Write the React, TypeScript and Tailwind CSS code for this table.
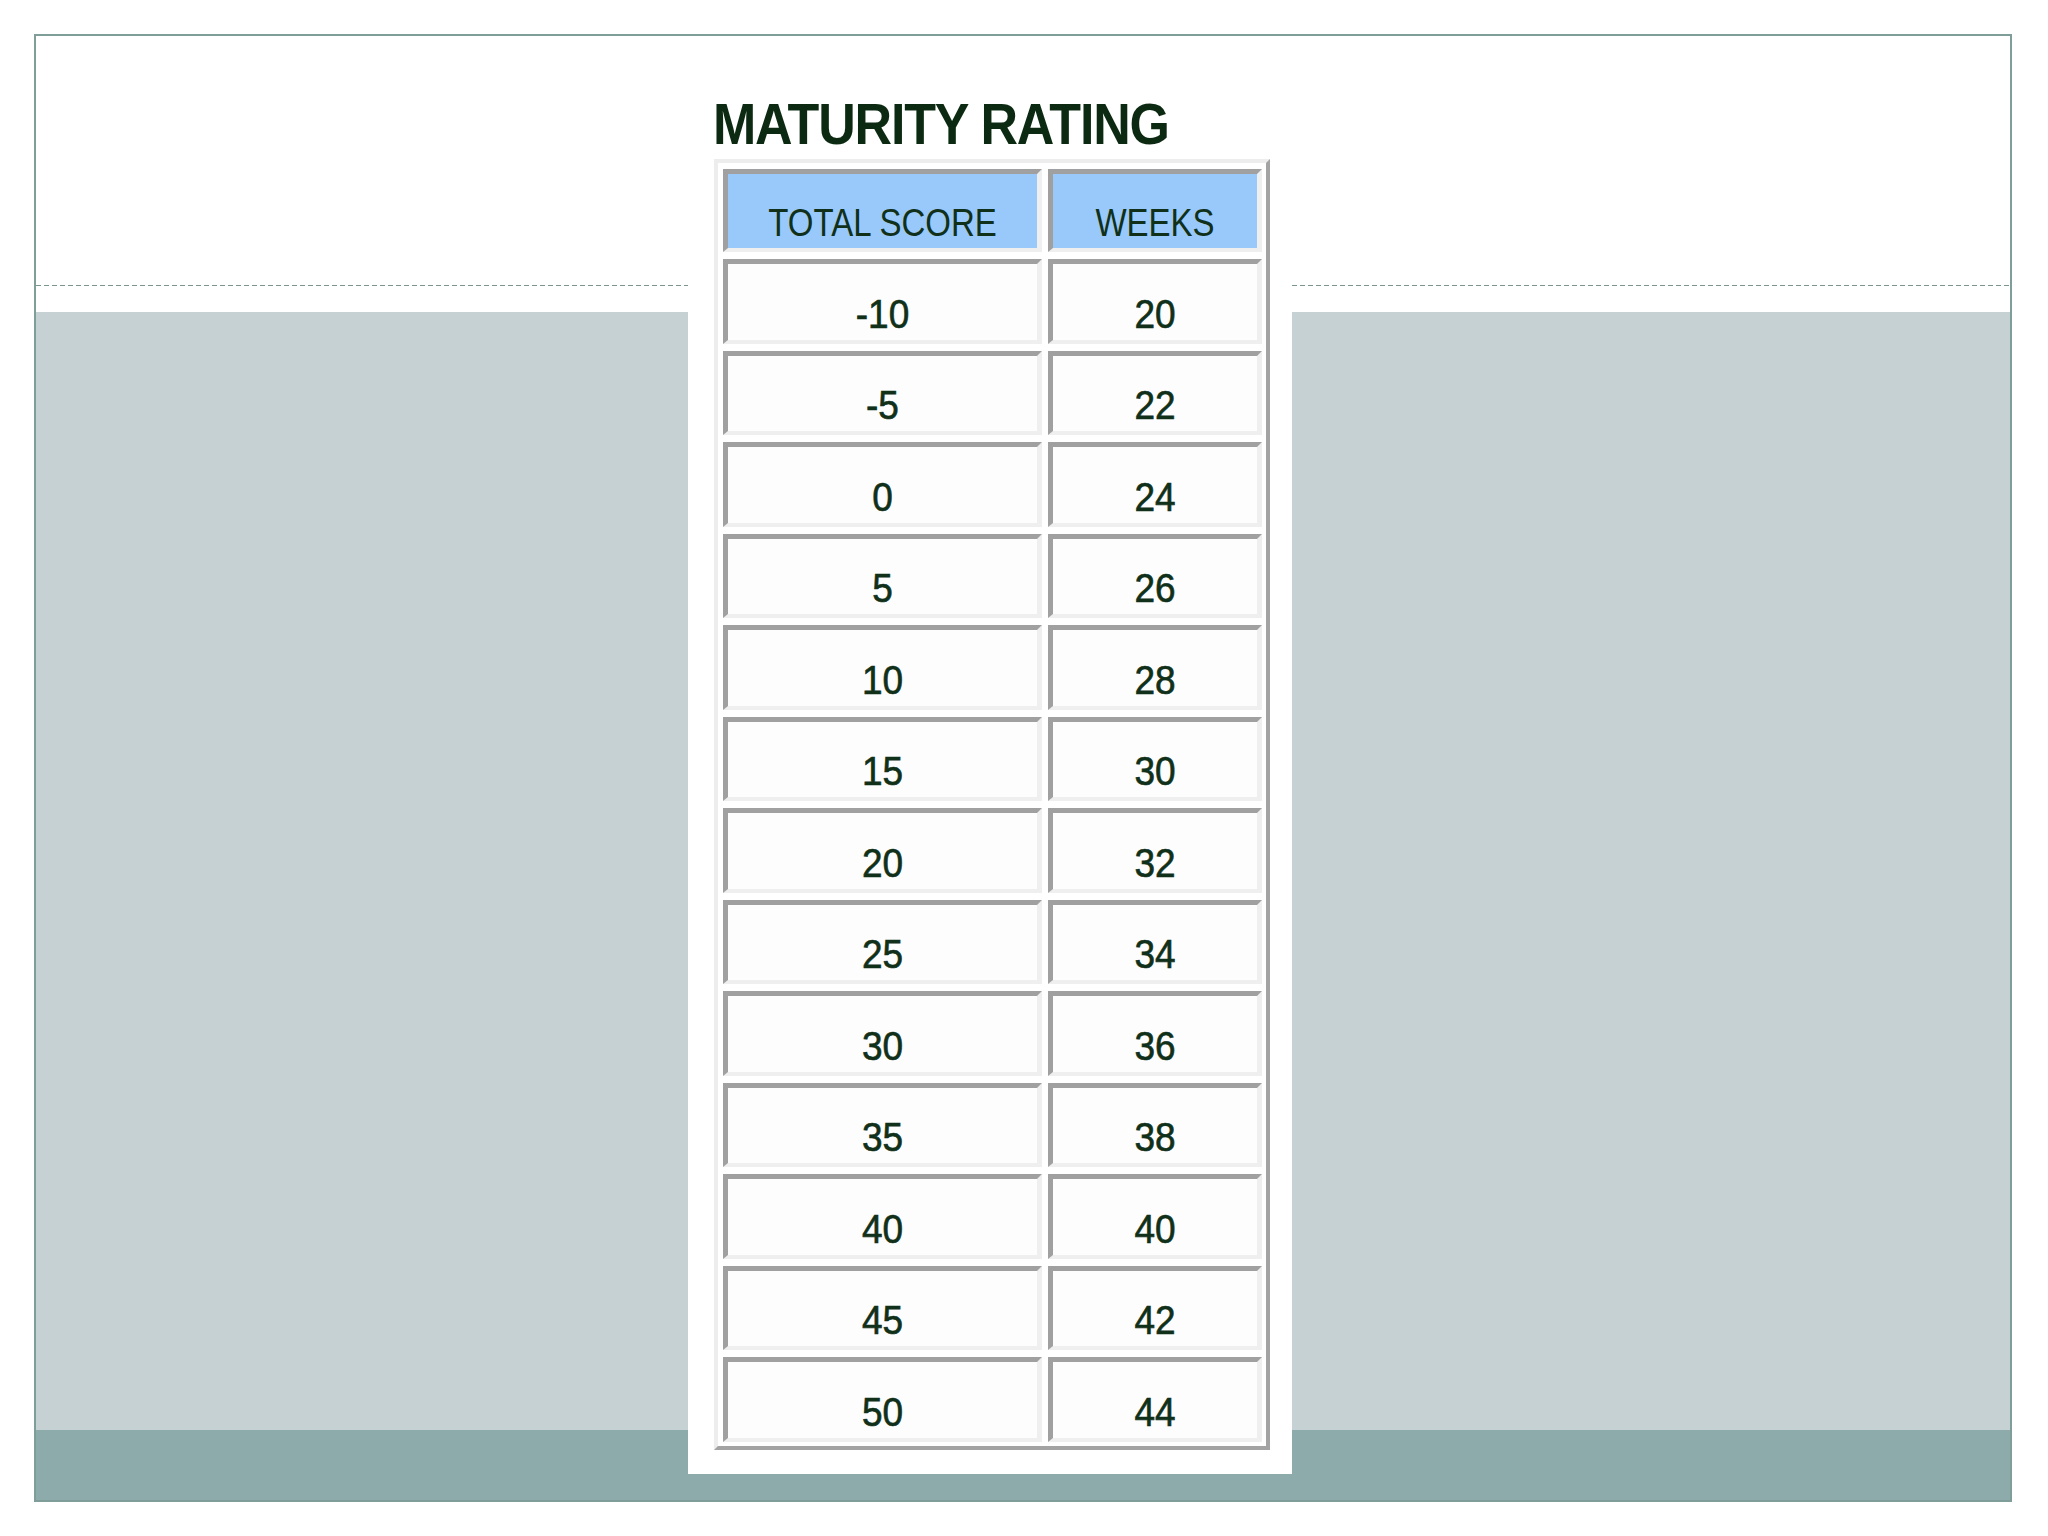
import React from "react";

const rows: [string, string][] = [
  ["-10", "20"],
  ["-5", "22"],
  ["0", "24"],
  ["5", "26"],
  ["10", "28"],
  ["15", "30"],
  ["20", "32"],
  ["25", "34"],
  ["30", "36"],
  ["35", "38"],
  ["40", "40"],
  ["45", "42"],
  ["50", "44"],
];

function Cell({ children, header }: { children: React.ReactNode; header?: boolean }) {
  return (
    <div
      className={
        "flex items-center justify-center border-t-[5px] border-l-[5px] border-b-[4px] border-r-[5px] border-t-[#a0a0a0] border-l-[#a0a0a0] border-b-[#efefef] border-r-[#efefef] leading-none text-[#10301a] " +
        (header
          ? "h-[83px] pt-[22px] bg-[#99c9fb] text-[33px]"
          : "h-[84.5px] pt-[25px] bg-[#fdfdfd] text-[37px] [-webkit-text-stroke:0.6px_#10301a]")
      }
    >
      <span className={header ? "inline-block scale-y-[1.15]" : "inline-block scale-y-[1.1]"}>{children}</span>
    </div>
  );
}

function SideColumn() {
  return (
    <div className="flex flex-col">
      <div className="h-[249px] bg-white" />
      <div className="h-px bg-[repeating-linear-gradient(90deg,#7b9691_0_5px,transparent_5px_8px)]" />
      <div className="h-[26px] bg-white" />
      <div className="h-[1118px] bg-[#c5d1d3]" />
      <div className="h-[70px] bg-[#8eabab]" />
    </div>
  );
}

export default function App() {
  return (
    <div className="w-[2048px] h-[1536px] bg-white pl-[34px] pt-[34px] font-['Liberation_Sans',Arial,sans-serif]">
      <div className="w-[1978px] h-[1468px] border-2 border-[#7f9e99] grid grid-cols-[652px_604px_718px]">
        <SideColumn />
        <div className="flex flex-col">
          <div className="h-[1438px] bg-white pt-[61px]">
            <div className="pl-[25px] h-[56px] flex items-end">
              <span className="inline-block origin-bottom scale-y-[1.12] text-[52px] leading-none font-bold tracking-[-1.2px] text-[#0c2a12]">
                MATURITY RATING
              </span>
            </div>
            <div className="ml-[26px] mt-[6px] w-[556px] border-4 border-t-[#ededed] border-l-[#ededed] border-b-[#a3a3a3] border-r-[#a3a3a3] pt-[6px] pb-[4px] pl-[5px] pr-[4px] bg-white">
              <div className="grid grid-cols-[319px_214px] gap-x-[6px] gap-y-[7px]">
                <Cell header>TOTAL SCORE</Cell>
                <Cell header>WEEKS</Cell>
                {rows.map(([a, b], i) => (
                  <React.Fragment key={i}>
                    <Cell>{a}</Cell>
                    <Cell>{b}</Cell>
                  </React.Fragment>
                ))}
              </div>
            </div>
          </div>
          <div className="h-[26px] bg-[#8eabab]" />
        </div>
        <SideColumn />
      </div>
    </div>
  );
}
